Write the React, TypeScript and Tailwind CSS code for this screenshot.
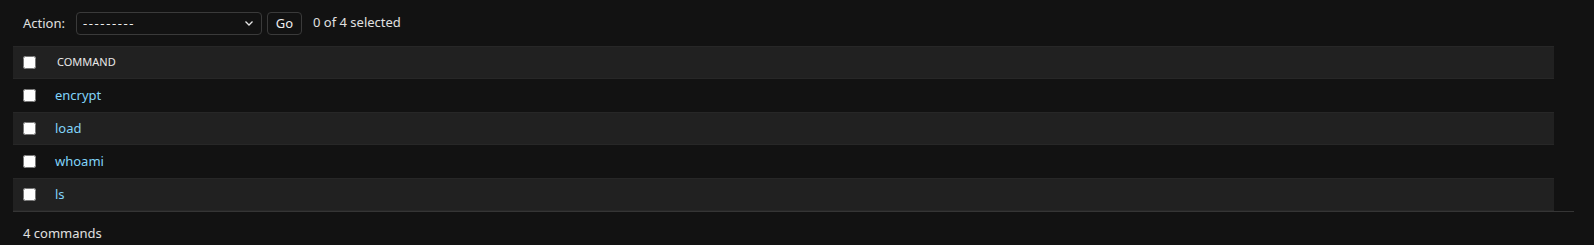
import React from 'react';

const commands = ['encrypt', 'load', 'whoami', 'ls'];

function Checkbox() {
  return (
    <input
      type="checkbox"
      className="m-0 block h-[13px] w-[13px]"
      readOnly
    />
  );
}

export default function App() {
  return (
    <div
      className="min-h-screen w-full bg-[#121212] text-[13px] text-[#eeeeee]"
      style={{ fontFamily: '"Noto Sans", "Open Sans", sans-serif' }}
    >
      <div className="pl-[13px] pr-[20px]">
        {/* Actions bar */}
        <div className="flex h-[46px] items-center pl-[10px]">
          <span className="pt-[1px] text-[#e0e0e0]">Action:</span>
          <div className="ml-[11px] flex h-[23px] w-[186px] items-center justify-between rounded-[4px] border border-[#3a3a3a] pl-[6px] pr-[7px]">
            <span className="pt-[1px] leading-none tracking-[1.6px]">---------</span>
            <svg width="10" height="10" viewBox="0 0 10 10" fill="none">
              <path d="M1.5 3.5 L5 7 L8.5 3.5" stroke="#e6e6e6" strokeWidth="1.3" />
            </svg>
          </div>
          <button className="ml-[5px] flex h-[23px] w-[35px] items-center justify-center rounded-[4px] border border-[#3a3a3a] bg-[#121212] pt-[2px] text-[#eeeeee]">
            Go
          </button>
          <span className="ml-[11px] text-[#e0e0e0]">0 of 4 selected</span>
        </div>

        {/* Results table */}
        <div className="mr-[20px]">
          <div className="flex h-[33px] items-center border-y border-[#272727] bg-[#212121]">
            <div className="w-[42px] pl-[10px]">
              <Checkbox />
            </div>
            <span className="pl-[2px] text-[11px] uppercase text-[#e8e8e8]">Command</span>
          </div>
          {commands.map((cmd, i) => (
            <div
              key={cmd}
              className={
                i % 2 === 1
                  ? 'flex h-[33px] items-center border-y border-[#272727] bg-[#212121]'
                  : 'flex h-[33px] items-center bg-[#121212]'
              }
            >
              <div className="w-[42px] pl-[10px]">
                <Checkbox />
              </div>
              <a href="#" className="text-[#81d4fa]">
                {cmd}
              </a>
            </div>
          ))}
        </div>

        {/* Paginator */}
        <div className="border-t border-[#353535] pl-[10px] pt-[10px] leading-[22px] text-[#e0e0e0]">
          4 commands
        </div>
      </div>
    </div>
  );
}
